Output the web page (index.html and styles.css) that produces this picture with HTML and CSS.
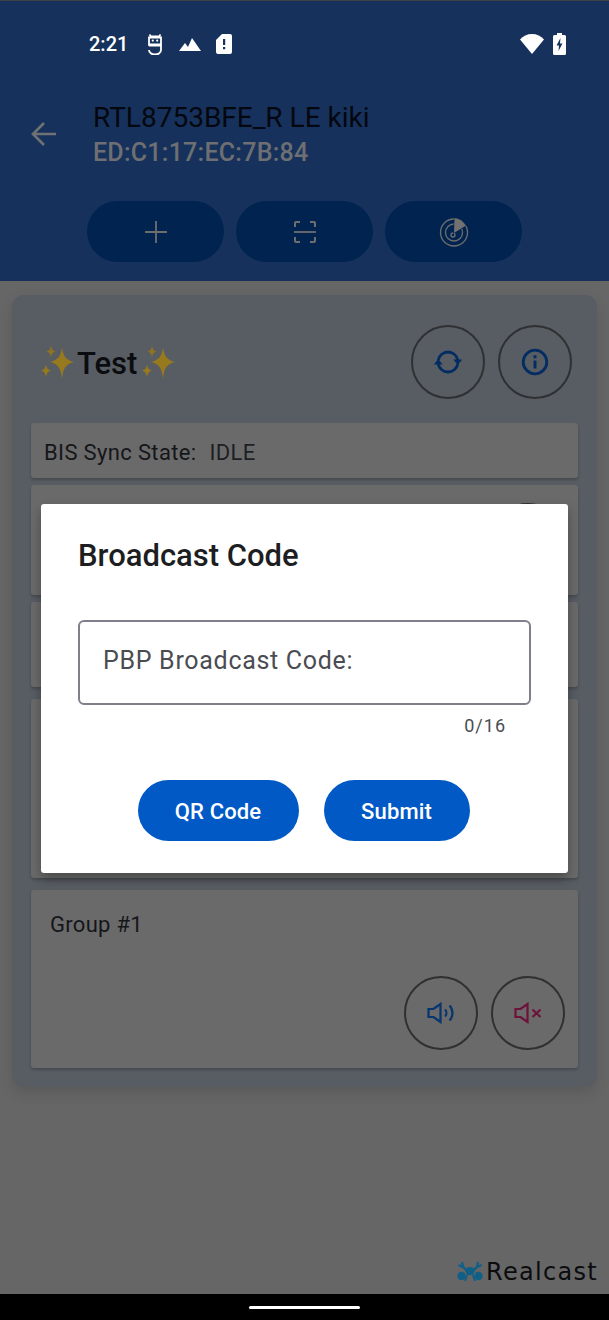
FILE: index.html

```html
<!DOCTYPE html>
<html lang="en">
<head>
  <meta charset="UTF-8" />
  <meta name="viewport" content="width=device-width, initial-scale=1" />
  <title>Broadcast Code</title>
  <link rel="stylesheet" href="styles.css">
</head>
<body>

<div class="app">
  <header class="top">
    <div class="status">
      <span class="clock">2:21</span>
      <svg class="st-app" viewBox="0 0 16 22" width="16" height="22"><path d="M2.500 1.500l1.500 2h8l1.500-2M2 4.500h12v7H2zM2 11.500c0 .5 0 1 .5 1H14v4.500a6 4.500 0 0 1-12 0" fill="none" stroke="#fff" stroke-width="1.800"/><circle cx="5.800" cy="7.600" r="1.100" fill="#fff"/><circle cx="10.200" cy="7.600" r="1.100" fill="#fff"/></svg>
      <svg class="st-hill" viewBox="0 0 22 14" width="22" height="14"><path d="M0 14l6-8 3 4 4-9 9 13z" fill="#fff"/></svg>
      <svg class="st-sim" viewBox="0 0 16 20" width="16" height="20"><path d="M6 0h8a2 2 0 0 1 2 2v16a2 2 0 0 1-2 2H2a2 2 0 0 1-2-2V6z" fill="#fff"/><path d="M7 5h2.200v6H7zM7 13h2.200v2.200H7z" fill="#16325c"/></svg>
      <span class="status-gap"></span>
      <svg class="st-wifi" viewBox="0 0 24 20" width="24" height="20"><path d="M12 20L0 5.500C3 2 7.200 0 12 0s9 2 12 5.500z" fill="#fff"/></svg>
      <svg class="st-batt" viewBox="0 0 13 22" width="13" height="22"><path d="M4 0h5v2h2.500A1.500 1.500 0 0 1 13 3.500v17a1.500 1.500 0 0 1-1.500 1.500h-10A1.500 1.500 0 0 1 0 20.500v-17A1.500 1.500 0 0 1 1.500 2H4z" fill="#fff"/><path d="M7.500 5L3.500 12.500h2.500L5.500 18l4-7.500H7z" fill="#16325c"/></svg>
    </div>

    <div class="titlebar">
      <svg class="back" viewBox="0 0 26 26" width="26" height="26"><path d="M25 13H2M13 2L2 13l11 11" fill="none" stroke="#6f7174" stroke-width="2.600"/></svg>
      <div>
        <div class="dev-name">RTL8753BFE_R LE kiki</div>
        <div class="dev-addr">ED:C1:17:EC:7B:84</div>
      </div>
    </div>

    <div class="pills">
      <button class="pill">
        <svg viewBox="0 0 22 22" width="22" height="22"><path d="M11 0v22M0 11h22" stroke="#6e6e6e" stroke-width="1.800" fill="none"/></svg>
      </button>
      <button class="pill">
        <svg viewBox="0 0 22 22" width="22" height="22"><path d="M1 6V2a1 1 0 0 1 1-1h4M16 1h4a1 1 0 0 1 1 1v4M21 16v4a1 1 0 0 1-1 1h-4M6 21H2a1 1 0 0 1-1-1v-4" stroke="#6e6e6e" stroke-width="2" fill="none"/><path d="M0 11h22" stroke="#6e6e6e" stroke-width="1.800"/></svg>
      </button>
      <button class="pill">
        <svg viewBox="0 0 30 30" width="30" height="30"><circle cx="15" cy="15.500" r="13.500" fill="none" stroke="#6e6e6e" stroke-width="1.300"/><circle cx="15" cy="15.500" r="8.500" fill="none" stroke="#6e6e6e" stroke-width="1.300"/><circle cx="14" cy="18" r="2" fill="none" stroke="#6e6e6e" stroke-width="1.300"/><path d="M14 17L15 0.500C20 1.500 25 4 28 8.500z" fill="#00234f"/><path d="M15 16L15.500 1C20 1.500 24 4 27 8.500z" fill="#717171"/></svg>
      </button>
    </div>
  </header>

  <main class="content">
    <section class="card">
      <div class="card-head">
        <h2 class="card-title">
          <svg class="spark" viewBox="0 0 36 36" width="36" height="36"><use href="#sparkles"/></svg><span class="card-name">Test</span><svg class="spark" viewBox="0 0 36 36" width="36" height="36"><use href="#sparkles"/></svg>
        </h2>
        <div class="round-group">
          <button class="round">
            <svg viewBox="0 0 28 24" width="28" height="24"><path d="M4.200 10A10 10 0 0 1 23.800 10M23.800 14A10 10 0 0 1 4.200 14" fill="none" stroke="#022c62" stroke-width="2.800"/><path d="M19.300 9.500h9l-4.500 5.500zM-0.300 14.500h9L4.200 9z" fill="#022c62"/></svg>
          </button>
          <button class="round">
            <svg viewBox="0 0 28 28" width="28" height="28"><circle cx="14" cy="14" r="11.800" fill="none" stroke="#022c62" stroke-width="2.800"/><path d="M12.500 12.500h3v8h-3zM12.500 7.200h3v3h-3z" fill="#022c62"/></svg>
          </button>
        </div>
      </div>

      <div class="row row-state">
        <span class="state-label">BIS Sync State:</span><span class="state-value">IDLE</span>
      </div>
      <div class="row row-two">
        <button class="round"></button>
      </div>
      <div class="row row-three"></div>
      <div class="row row-four"></div>
      <div class="row row-group">
        <div class="group-name">Group #1</div>
        <div class="group-btns">
          <button class="round">
            <svg viewBox="0 0 28 22" width="28" height="22"><path d="M1.500 7v8h5l7 5V2l-7 5z" fill="none" stroke="#063570" stroke-width="2.200"/><path d="M18 7.500a5 5 0 0 1 0 7M22.500 3.500a11 11 0 0 1 0 15" fill="none" stroke="#063570" stroke-width="2.200"/></svg>
          </button>
          <button class="round">
            <svg viewBox="0 0 28 22" width="28" height="22"><path d="M1.500 7v8h5l7 5V2l-7 5z" fill="none" stroke="#6f123a" stroke-width="2.200"/><path d="M18.500 7.500l8 7.500M26.500 7.500l-8 7.500" fill="none" stroke="#6f123a" stroke-width="2.200"/></svg>
          </button>
        </div>
      </div>
    </section>

    <div class="brand">
      <svg viewBox="0 0 26 22" width="26" height="22"><path d="M5 1l1 5 3 2.500M21 1l-1 5-3 2.500M1.500 4l4 2M24.500 4l-4 2" fill="none" stroke="#125f86" stroke-width="2.400"/><path d="M8 10a5 4 0 0 1 10 0l-2 4h-6z" fill="#125f86"/><circle cx="4.500" cy="15" r="4.200" fill="#125f86"/><circle cx="21.500" cy="15" r="4.200" fill="#125f86"/><path d="M10 14l-2 6M16 14l2 6" stroke="#125f86" stroke-width="2"/></svg>
      <span class="brand-name">Realcast</span>
    </div>
  </main>

  <div class="navbar"><span class="handle"></span></div>

  <div class="dialog">
    <h3 class="dialog-title">Broadcast Code</h3>
    <div class="field">PBP Broadcast Code:</div>
    <div class="counter">0/16</div>
    <div class="dialog-btns">
      <button class="btn btn-qr">QR Code</button>
      <button class="btn btn-submit">Submit</button>
    </div>
  </div>
</div>

<svg class="defs" width="0" height="0">
  <symbol id="sparkles" viewBox="0 0 36 36">
    <path d="M22 2c1 9 4 13 12 15-8 2-11 6-12 17-1-11-4-15-12-17 8-2 11-6 12-15z" fill="#977a1e"/>
    <path d="M11 0c.5 4 1.500 5.500 4.500 6.500-3 1-4 2.500-4.500 6.500-.5-4-1.500-5.500-4.500-6.500 3-1 4-2.500 4.500-6.500z" fill="#8f7224"/>
    <path d="M6 19c.5 4 1.500 5.500 5 6.500-3.500 1-4.500 3-5 7.500-.5-4.500-1.500-6.500-5-7.500 3.500-1 4.500-2.500 5-6.500z" fill="#977a1e"/>
  </symbol>
</svg>

</body>
</html>
```

FILE: styles.css

```css
* {
  box-sizing: border-box;
}
body {
  margin: 0;
  font-family: Roboto, "Noto Sans", sans-serif;
  background-color: #666;
}
button {
  font-family: inherit;
  cursor: pointer;
}
.defs {
  display: block;
}
.app {
  position: relative;
  width: 609px;
  height: 1320px;
  display: flex;
  flex-direction: column;
  overflow: hidden;
}

/* header */
.top {
  height: 281px;
  background-color: #16325c;
  border-top: 1px solid #3c4146;
  flex: none;
}
.status {
  height: 22px;
  margin-top: 32px;
  padding: 0 43px 0 89px;
  display: flex;
  align-items: center;
  color: #fff;
}
.clock {
  font-size: 20px;
  font-weight: 500;
  margin-right: 19px;
}
.st-hill {
  margin-left: 16px;
}
.st-sim {
  margin-left: 15px;
}
.status-gap {
  flex: 1;
}
.st-wifi {
  margin-right: 9px;
}
.titlebar {
  display: flex;
  align-items: center;
  margin-top: 45px;
  padding-left: 31px;
  gap: 36px;
}
.dev-name {
  font-size: 28px;
  line-height: 36px;
  color: #04070f;
}
.dev-addr {
  margin-top: 2px;
  font-size: 25px;
  line-height: 30px;
  font-weight: 500;
  letter-spacing: 0.25px;
  color: #6e6f72;
}
.pills {
  display: flex;
  gap: 12px;
  margin-top: 33px;
  padding-left: 87px;
}
.pill {
  width: 137px;
  height: 61px;
  border: none;
  border-radius: 31px;
  background-color: #00234f;
  display: flex;
  align-items: center;
  justify-content: center;
}

/* content */
.content {
  flex: 1;
  display: flex;
  flex-direction: column;
  padding: 14px 12px 0;
}
.card {
  height: 792px;
  padding: 0 19px;
  background-color: #585c63;
  border-radius: 12px;
  box-shadow: 0 6px 14px rgba(0, 0, 0, 0.12);
}
.card-head {
  height: 128px;
  display: flex;
  align-items: center;
  justify-content: space-between;
  padding: 6px 6px 0 8px;
}
.card-title {
  margin: 2px 0 0;
  display: flex;
  align-items: center;
  font-size: 31px;
  font-weight: 500;
  color: #0b0c0f;
}
.card-name {
  margin-right: 3px;
}
.spark {
  margin: 0 1px;
}
.round-group {
  display: flex;
  gap: 13px;
}
.round {
  width: 74px;
  height: 74px;
  border: 2px solid #2f3032;
  border-radius: 50%;
  background: transparent;
  padding: 0;
  display: flex;
  align-items: center;
  justify-content: center;
}
.row {
  background-color: #6a6a6a;
  border-radius: 3px;
  box-shadow: 0 2px 3px rgba(0, 0, 0, 0.2);
  color: #15161a;
  font-size: 22px;
}
.row-state {
  height: 55px;
  padding: 3px 0 0 13px;
  display: flex;
  align-items: center;
  letter-spacing: 0.35px;
}
.state-label {
  margin-right: 13px;
}
.state-value {
  color: #1e1f24;
}
.row-two {
  height: 110px;
  margin-top: 7px;
  padding-top: 18px;
  display: flex;
  justify-content: flex-end;
  padding-right: 13px;
}
.row-three {
  height: 85px;
  margin-top: 7px;
}
.row-four {
  height: 179px;
  margin-top: 12px;
}
.row-group {
  height: 178px;
  margin-top: 12px;
  padding: 23px 13px 0 19px;
}
.group-name {
  line-height: 24px;
  letter-spacing: 0.3px;
}
.group-btns {
  display: flex;
  justify-content: flex-end;
  gap: 13px;
  margin-top: 39px;
}
.brand {
  margin-top: auto;
  height: 26px;
  margin-right: -1px;
  margin-bottom: 9px;
  display: flex;
  align-items: center;
  justify-content: flex-end;
  gap: 3px;
}
.brand-name {
  font-family: "DejaVu Sans", sans-serif;
  font-size: 24px;
  line-height: 26px;
  letter-spacing: 1.300px;
  color: #0b0c0e;
}
.navbar {
  height: 26px;
  flex: none;
  background-color: #000;
  display: flex;
  align-items: center;
  justify-content: center;
}
.handle {
  width: 111px;
  height: 3px;
  border-radius: 2px;
  background-color: #fff;
}

/* dialog */
.dialog {
  position: absolute;
  left: 41px;
  top: 504px;
  width: 527px;
  height: 369px;
  padding: 34px 37px 0;
  background-color: #fff;
  border-radius: 3px;
  box-shadow: 0 6px 12px rgba(0, 0, 0, 0.3);
}
.dialog-title {
  margin: 0;
  font-size: 31px;
  line-height: 36px;
  font-weight: 500;
  color: #1d1e22;
}
.field {
  height: 85px;
  margin-top: 46px;
  padding: 24px 23px 0;
  border: 2px solid #80808a;
  border-radius: 6px;
  font-size: 25px;
  line-height: 30px;
  letter-spacing: 0.7px;
  color: #4a4c52;
}
.counter {
  margin-top: 10px;
  padding-right: 25px;
  text-align: right;
  font-size: 18px;
  line-height: 21px;
  letter-spacing: 1px;
  color: #4a4c52;
}
.dialog-btns {
  display: flex;
  justify-content: center;
  gap: 25px;
  margin-top: 44px;
  padding-right: 2px;
}
.btn {
  height: 61px;
  padding: 2px 0 0;
  border: none;
  border-radius: 31px;
  background-color: #0059c5;
  color: #fff;
  font-size: 22px;
  font-weight: 500;
  letter-spacing: 0.15px;
}
.btn-qr {
  width: 161px;
}
.btn-submit {
  width: 146px;
}
```
